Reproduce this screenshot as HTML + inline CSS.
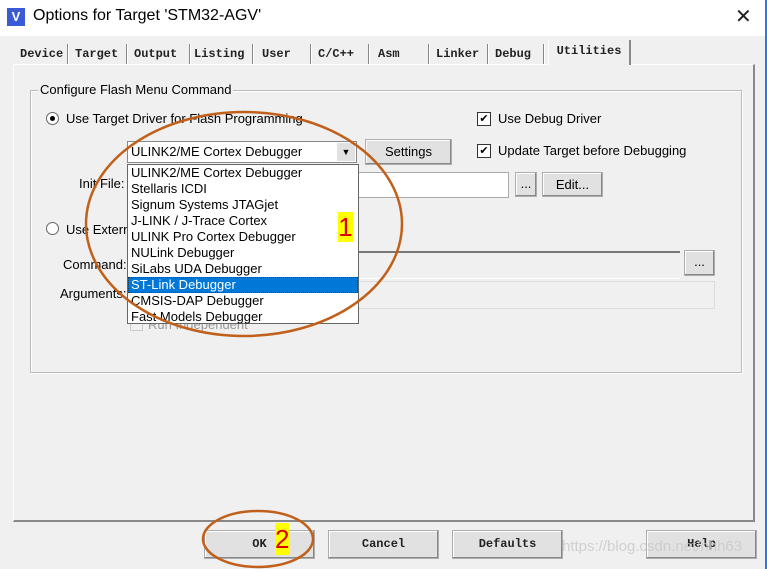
<!DOCTYPE html><html><head><style>
body{margin:0;width:767px;height:569px;background:#f0f0f0;position:relative;overflow:hidden;font-family:"Liberation Sans",sans-serif;font-size:13px;color:#000}
.a{position:absolute}
.m{font-family:"Liberation Mono",monospace;font-size:12px;font-weight:bold;color:#222}
.btn{position:absolute;background:#e1e1e1;border:1px solid #adadad;box-shadow:inset -1px -1px #888,inset 1px 1px #fff;text-align:center;box-sizing:border-box}
.tab{position:absolute;top:44px;height:20px;line-height:20px;border-right:1px solid #888;box-shadow:1px 0 #fff}
.cb{position:absolute;width:12px;height:12px;border:1px solid #333;background:#fff;font-size:11px;line-height:12px;text-align:center}
.li{height:16px;line-height:16px;padding-left:3px}
</style></head><body>
<div class="a" style="left:0;top:0;width:767px;height:36px;background:#fff"></div>
<div class="a" style="left:765px;top:0;width:2px;height:569px;background:#2b7bd8"></div>
<div class="a" style="left:7px;top:8px;width:18px;height:18px;background:#3b5bd6;color:#fff;font-size:13px;font-weight:bold;text-align:center;line-height:18px">V</div>
<div class="a" style="left:33px;top:7px;font-size:16px">Options for Target 'STM32-AGV'</div>
<div class="a" style="left:735px;top:4px;font-size:20px;color:#222">✕</div>
<!-- panel -->
<div class="a" style="left:13px;top:64px;width:742px;height:458px;border:1px solid #fff;border-right:2px solid #888;border-bottom:2px solid #888;box-sizing:border-box"></div>
<div class="tab m" style="left:20px;width:47px">Device</div>
<div class="tab m" style="left:75px;width:51px">Target</div>
<div class="tab m" style="left:134px;width:55px">Output</div>
<div class="tab m" style="left:194px;width:58px">Listing</div>
<div class="tab m" style="left:262px;width:48px">User</div>
<div class="tab m" style="left:318px;width:50px">C/C++</div>
<div class="tab m" style="left:378px;width:50px">Asm</div>
<div class="tab m" style="left:436px;width:51px">Linker</div>
<div class="tab m" style="left:495px;width:48px">Debug</div>
<div class="a m" style="left:548px;top:40px;width:80px;height:25px;background:#f0f0f0;border-left:1px solid #fff;border-right:2px solid #888;line-height:22px;text-align:center">Utilities</div>
<!-- group -->
<div class="a" style="left:30px;top:90px;width:710px;height:281px;border:1px solid #bbb;box-shadow:inset 1px 1px #fff,1px 1px #fff"></div>
<div class="a" style="left:38px;top:82px;background:#f0f0f0;padding:0 2px">Configure Flash Menu Command</div>
<div class="a" style="left:46px;top:112px;width:11px;height:11px;border-radius:50%;border:1px solid #666;background:#fff"><div style="margin:3px;width:5px;height:5px;border-radius:50%;background:#000"></div></div>
<div class="a" style="left:66px;top:111px">Use Target Driver for Flash Programming</div>
<div class="cb" style="left:477px;top:112px">✔</div><div class="a" style="left:498px;top:111px">Use Debug Driver</div>
<div class="cb" style="left:477px;top:144px">✔</div><div class="a" style="left:498px;top:143px">Update Target before Debugging</div>
<div class="btn" style="left:365px;top:139px;width:87px;height:26px;line-height:24px">Settings</div>
<div class="a" style="left:79px;top:176px">Init File:</div>
<div class="a" style="left:355px;top:172px;width:152px;height:24px;background:#fff;border:1px solid #aaa"></div>
<div class="btn" style="left:515px;top:172px;width:22px;height:25px;line-height:22px">...</div>
<div class="btn" style="left:542px;top:172px;width:61px;height:25px;line-height:23px">Edit...</div>
<div class="a" style="left:46px;top:222px;width:11px;height:11px;border-radius:50%;border:1px solid #666;background:#fff"></div>
<div class="a" style="left:66px;top:222px">Use Extern</div>
<div class="a" style="left:63px;top:257px">Command:</div>
<div class="a" style="left:60px;top:286px">Arguments:</div>
<div class="a" style="left:355px;top:251px;width:325px;height:25px;border-top:2px solid #777;background:#f0f0f0;border-bottom:1px solid #fff"></div>
<div class="btn" style="left:684px;top:250px;width:31px;height:26px;line-height:22px">...</div>
<div class="a" style="left:355px;top:281px;width:358px;height:26px;border-top:2px solid #999;border:1px solid #ddd"></div>
<div class="a" style="left:130px;top:318px;width:11px;height:11px;border:1px solid #ccc"></div>
<div class="a" style="left:148px;top:317px;color:#999">Run Independent</div>
<!-- combo -->
<div class="a" style="left:127px;top:141px;width:230px;height:22px;background:#fff;border:1px solid #888;box-sizing:border-box;line-height:20px;padding-left:3px">ULINK2/ME Cortex Debugger</div>
<div class="a" style="left:337px;top:143px;width:18px;height:18px;background:#e1e1e1;font-size:9px;text-align:center;line-height:18px">▼</div>
<div class="a" style="left:127px;top:164px;width:232px;height:160px;background:#fff;border:1px solid #666;box-sizing:border-box">
<div class="li">ULINK2/ME Cortex Debugger</div><div class="li">Stellaris ICDI</div><div class="li">Signum Systems JTAGjet</div><div class="li">J-LINK / J-Trace Cortex</div><div class="li">ULINK Pro Cortex Debugger</div><div class="li">NULink Debugger</div><div class="li">SiLabs UDA Debugger</div><div class="li" style="background:#0078d7;color:#fff;outline:1px dotted #333;outline-offset:-1px">ST-Link Debugger</div><div class="li">CMSIS-DAP Debugger</div><div class="li">Fast Models Debugger</div></div>
<div class="a" style="left:338px;top:212px;width:15px;height:30px;background:#ffff00;color:#d00;font-size:26px;line-height:30px;text-align:center">1</div>
<!-- buttons -->
<div class="btn m" style="left:204px;top:530px;width:111px;height:29px;line-height:27px">OK</div>
<div class="btn m" style="left:328px;top:530px;width:111px;height:29px;line-height:27px">Cancel</div>
<div class="btn m" style="left:452px;top:530px;width:111px;height:29px;line-height:27px">Defaults</div>
<div class="btn m" style="left:646px;top:530px;width:111px;height:29px;line-height:27px">Help</div>
<div class="a" style="left:275px;top:523px;width:14px;height:32px;background:#ffff00;color:#d00;font-size:26px;line-height:32px;text-align:center">2</div>
<div class="a" style="left:562px;top:538px;font-size:15px;color:rgba(200,200,200,.8)">https://blog.csdn.net/hhh63</div>
<svg class="a" style="left:0;top:0" width="767" height="569"><g fill="none" stroke="#c0601a" stroke-width="2.5"><ellipse cx="244" cy="224" rx="158" ry="112"/><ellipse cx="258" cy="539" rx="55" ry="28"/></g></svg>
</body></html>
